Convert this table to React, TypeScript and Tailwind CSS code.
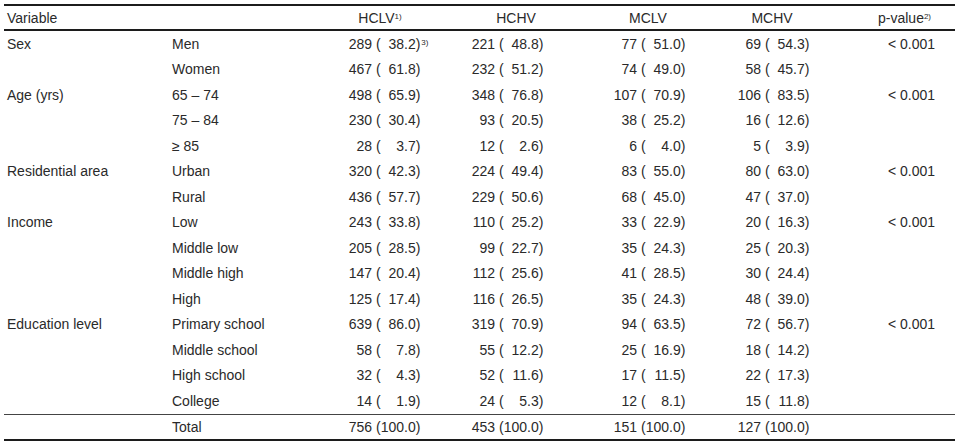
type Val = [number, string];
type Row = { name: string; vals: Val[]; note?: string };
type Group = { label: string; p?: string; rows: Row[] };

const groups: Group[] = [
  {
    label: 'Sex',
    p: '< 0.001',
    rows: [
      { name: 'Men', vals: [[289, '38.2'], [221, '48.8'], [77, '51.0'], [69, '54.3']], note: '3)' },
      { name: 'Women', vals: [[467, '61.8'], [232, '51.2'], [74, '49.0'], [58, '45.7']] }
    ]
  },
  {
    label: 'Age (yrs)',
    p: '< 0.001',
    rows: [
      { name: '65 – 74', vals: [[498, '65.9'], [348, '76.8'], [107, '70.9'], [106, '83.5']] },
      { name: '75 – 84', vals: [[230, '30.4'], [93, '20.5'], [38, '25.2'], [16, '12.6']] },
      { name: '≥ 85', vals: [[28, '3.7'], [12, '2.6'], [6, '4.0'], [5, '3.9']] }
    ]
  },
  {
    label: 'Residential area',
    p: '< 0.001',
    rows: [
      { name: 'Urban', vals: [[320, '42.3'], [224, '49.4'], [83, '55.0'], [80, '63.0']] },
      { name: 'Rural', vals: [[436, '57.7'], [229, '50.6'], [68, '45.0'], [47, '37.0']] }
    ]
  },
  {
    label: 'Income',
    p: '< 0.001',
    rows: [
      { name: 'Low', vals: [[243, '33.8'], [110, '25.2'], [33, '22.9'], [20, '16.3']] },
      { name: 'Middle low', vals: [[205, '28.5'], [99, '22.7'], [35, '24.3'], [25, '20.3']] },
      { name: 'Middle high', vals: [[147, '20.4'], [112, '25.6'], [41, '28.5'], [30, '24.4']] },
      { name: 'High', vals: [[125, '17.4'], [116, '26.5'], [35, '24.3'], [48, '39.0']] }
    ]
  },
  {
    label: 'Education level',
    p: '< 0.001',
    rows: [
      { name: 'Primary school', vals: [[639, '86.0'], [319, '70.9'], [94, '63.5'], [72, '56.7']] },
      { name: 'Middle school', vals: [[58, '7.8'], [55, '12.2'], [25, '16.9'], [18, '14.2']] },
      { name: 'High school', vals: [[32, '4.3'], [52, '11.6'], [17, '11.5'], [22, '17.3']] },
      { name: 'College', vals: [[14, '1.9'], [24, '5.3'], [12, '8.1'], [15, '11.8']] }
    ]
  }
];

const totals: Val[] = [[756, '100.0'], [453, '100.0'], [151, '100.0'], [127, '100.0']];

// left padding of each value column so the 3-digit counts line up with the original
const valPad = ['pl-[28px]', 'pl-[31px]', 'pl-[21px]', 'pl-[33px]'];

const gridCols = 'grid grid-cols-[168px_148px_120px_152px_112px_136px_115px]';

const Num = ({ v, note }: { v: Val; note?: string }) => (
  <span className="inline-flex items-baseline whitespace-nowrap">
    <span className="inline-block w-[24px] text-right">{v[0]}</span>
    <span className="ml-[4px]">(</span>
    <span className="inline-block w-[35px] text-right">{v[1]}</span>
    <span>)</span>
    {note && <sup className="ml-[1px] text-[8px]">{note}</sup>}
  </span>
);

const DataRow = ({ label, row, p }: { label?: string; row: Row; p?: string }) => (
  <div className={`${gridCols} h-[25.5px] items-center`}>
    <div className="pl-[3px]">{label}</div>
    <div>{row.name}</div>
    {row.vals.map((v, i) => (
      <div key={i} className={valPad[i]}>
        <Num v={v} note={i === 0 ? row.note : undefined} />
      </div>
    ))}
    <div className="pl-[48px]">{p}</div>
  </div>
);

export default function App() {
  return (
    <div className="h-[445px] w-[959px] bg-white pt-[4px] text-[14px] leading-none text-[#2a2a2a]" style={{ fontFamily: '"Liberation Sans", Arial, sans-serif' }}>
      <div className="ml-[4px] w-[951px] border-y-2 border-[#1c1c1c]">
        <div className={`${gridCols} h-[25px] items-center border-b-2 border-[#1c1c1c]`}>
          <div className="pl-[3px]">Variable</div>
          <div />
          <div className="text-center">
            HCLV<sup className="text-[8px]">1)</sup>
          </div>
          <div className="text-center">HCHV</div>
          <div className="text-center">MCLV</div>
          <div className="text-center">MCHV</div>
          <div className="pl-[38px]">
            p-value<sup className="text-[8px]">2)</sup>
          </div>
        </div>

        {groups.map((g) =>
          g.rows.map((r, i) => (
            <DataRow key={g.label + r.name} label={i === 0 ? g.label : undefined} p={i === 0 ? g.p : undefined} row={r} />
          ))
        )}

        <div className={`${gridCols} h-[25px] items-center border-t border-[#444]`}>
          <div />
          <div>Total</div>
          {totals.map((v, i) => (
            <div key={i} className={valPad[i]}>
              <Num v={v} />
            </div>
          ))}
          <div />
        </div>
      </div>
    </div>
  );
}
